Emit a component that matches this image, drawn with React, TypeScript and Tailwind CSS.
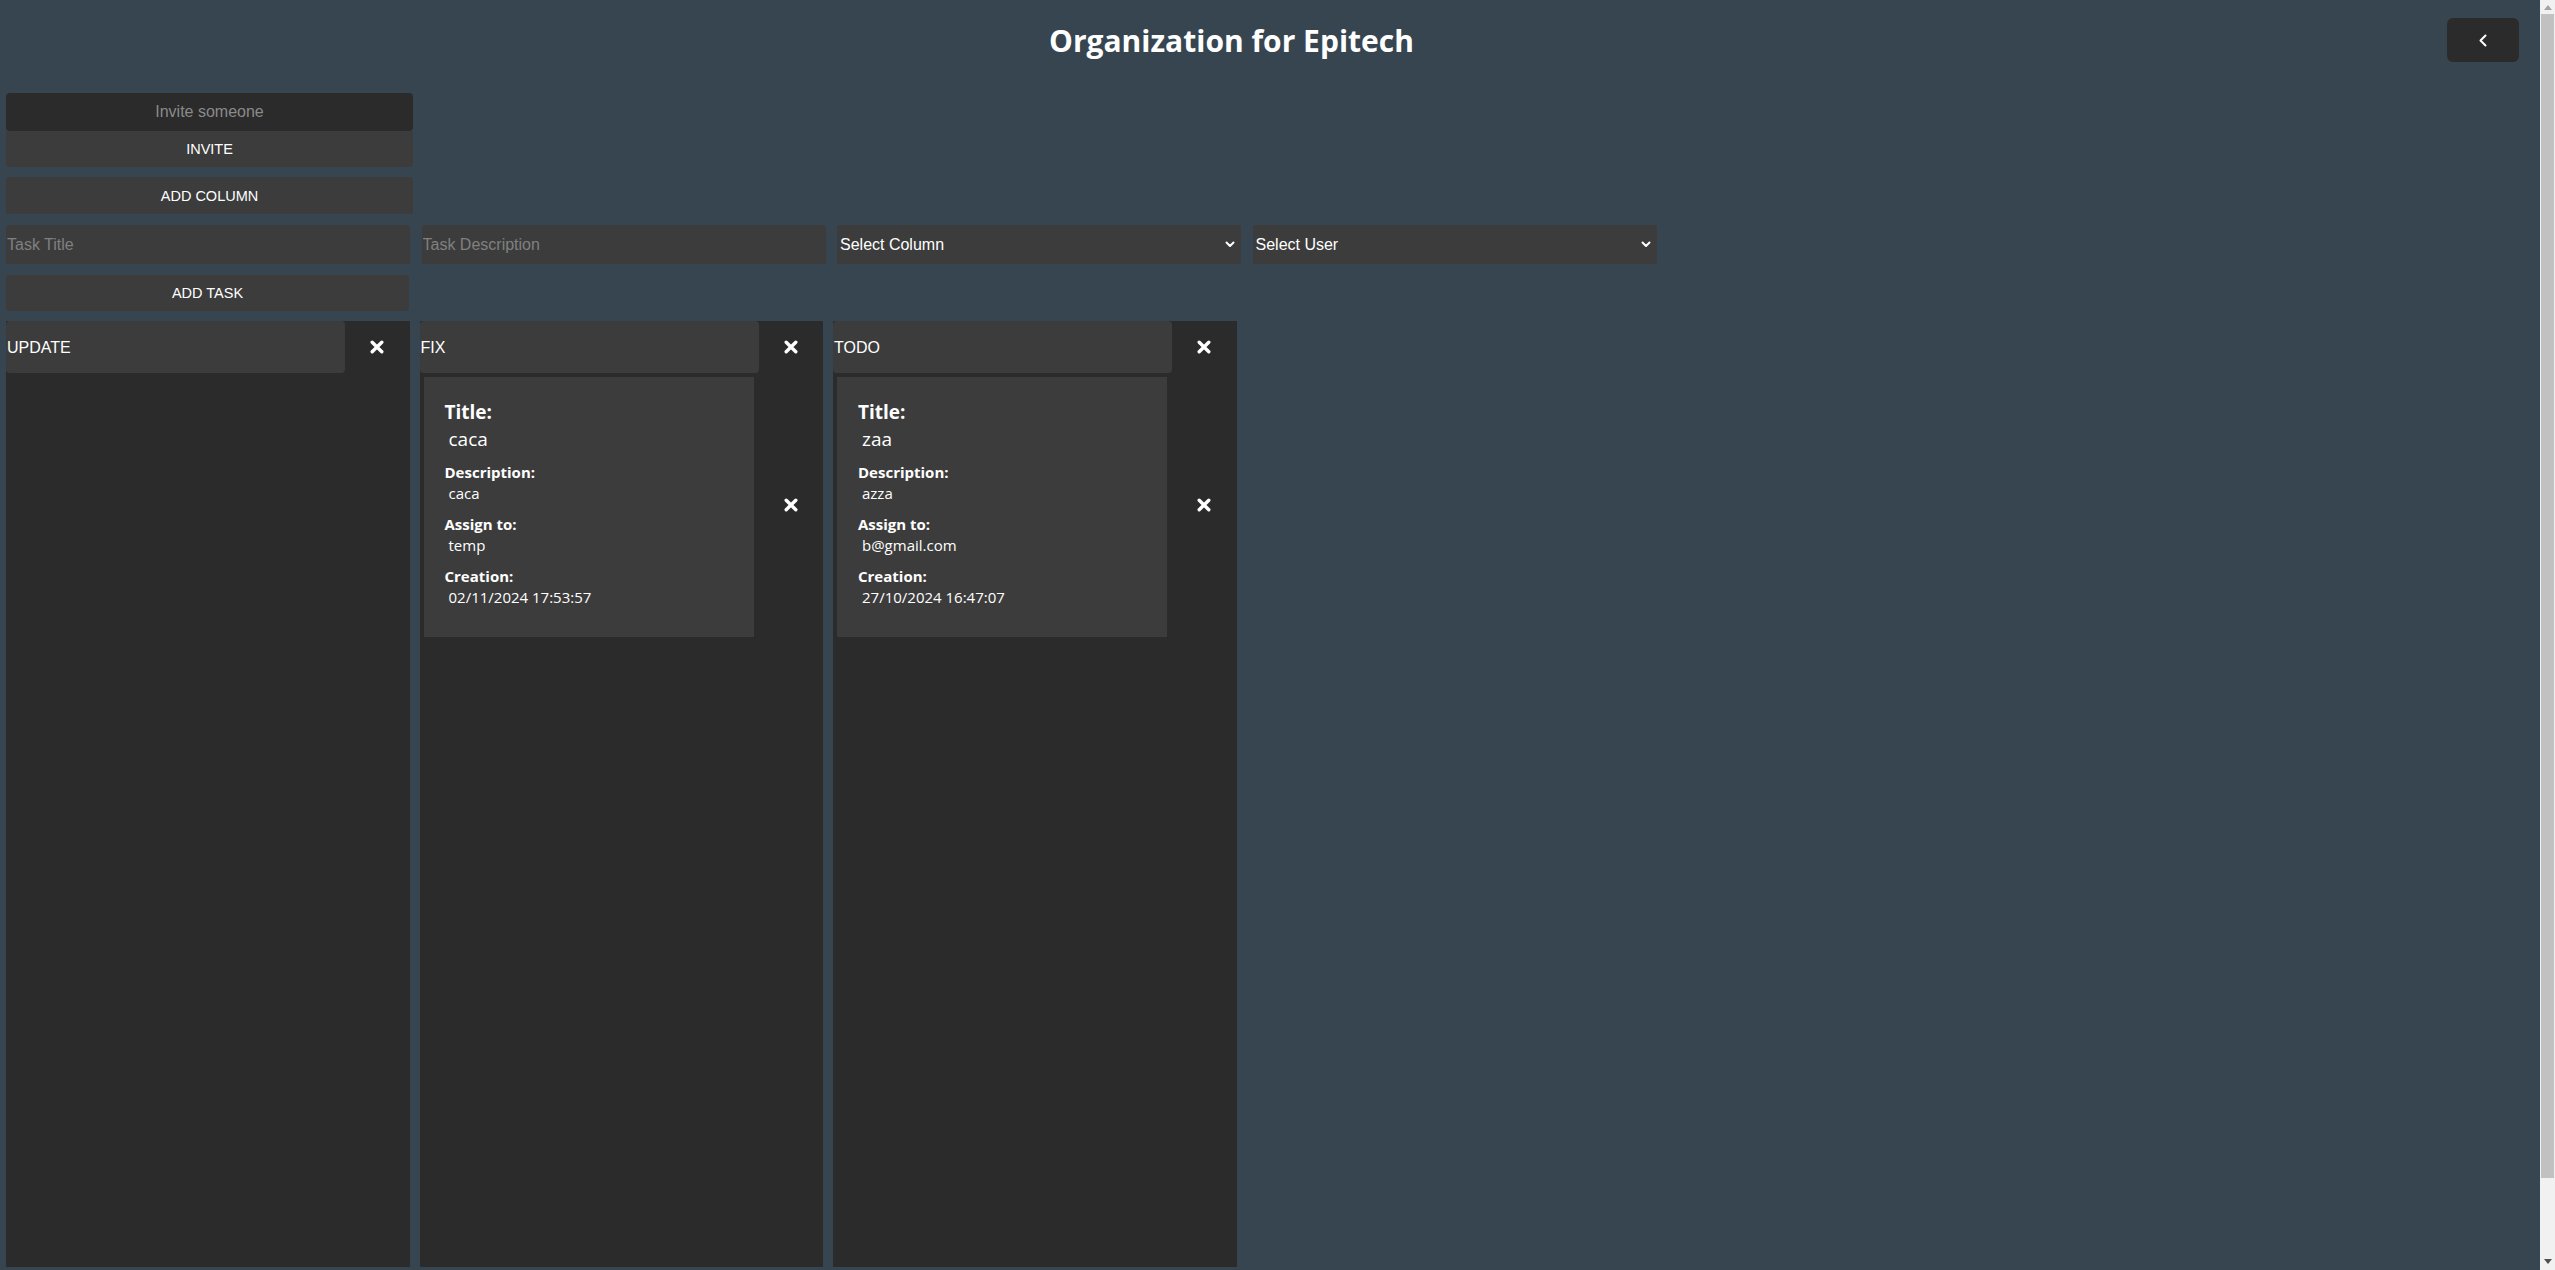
import React from "react";

const XIcon = () => (
  <svg width="14" height="14" viewBox="0 0 14 14" aria-hidden="true">
    <path d="M2.2 2.2 L11.8 11.8 M11.8 2.2 L2.2 11.8" stroke="#ffffff" strokeWidth="3.4" strokeLinecap="round" fill="none" />
  </svg>
);

const Chevron = () => (
  <svg width="10" height="7" viewBox="0 0 10 7" aria-hidden="true">
    <path d="M1.5 1.5 L5 5 L8.5 1.5" stroke="#ffffff" strokeWidth="2" fill="none" strokeLinecap="round" strokeLinejoin="round" />
  </svg>
);

type Task = { title: string; description: string; assign: string; creation: string };
type Column = { name: string; tasks: Task[] };

const columns: Column[] = [
  { name: "UPDATE", tasks: [] },
  {
    name: "FIX",
    tasks: [{ title: "caca", description: "caca", assign: "temp", creation: "02/11/2024 17:53:57" }],
  },
  {
    name: "TODO",
    tasks: [{ title: "zaa", description: "azza", assign: "b@gmail.com", creation: "27/10/2024 16:47:07" }],
  },
];

function TaskCard({ task }: { task: Task }) {
  return (
    <div className="mt-[4px] flex">
      <div className="w-[339px] pl-[4px] pr-[5px]">
        <div className="w-[330px] bg-[#3c3c3c] px-[21px] pb-[30px] pt-[23px] font-['Open_Sans',sans-serif] text-white">
          <div className="text-[19px] font-bold leading-[24px]">Title:</div>
          <div className="mt-[3px] pl-[4px] text-[19px] leading-[24px]">{task.title}</div>
          <div className="mt-[11px] text-[15px] font-bold leading-[20px]">Description:</div>
          <div className="mt-[1px] pl-[4px] text-[15px] leading-[20px]">{task.description}</div>
          <div className="mt-[11px] text-[15px] font-bold leading-[20px]">Assign to:</div>
          <div className="mt-[1px] pl-[4px] text-[15px] leading-[20px]">{task.assign}</div>
          <div className="mt-[11px] text-[15px] font-bold leading-[20px]">Creation:</div>
          <div className="mt-[1px] pl-[4px] text-[15px] leading-[20px]">{task.creation}</div>
        </div>
      </div>
      <div className="flex flex-1 items-center justify-center pb-[4px]">
        <button className="flex items-center justify-center">
          <XIcon />
        </button>
      </div>
    </div>
  );
}

function BoardColumn({ col }: { col: Column }) {
  return (
    <div className="h-full w-[403.5px] shrink-0 bg-[#2b2b2b]">
      <div className="flex">
        <div className="flex h-[52px] w-[339px] items-center rounded-[4px] bg-[#3c3c3c] pl-[1px] pt-[2px] text-[16px] text-white">
          {col.name}
        </div>
        <div className="flex flex-1 items-center justify-center">
          <button className="flex items-center justify-center">
            <XIcon />
          </button>
        </div>
      </div>
      {col.tasks.map((t, i) => (
        <TaskCard key={i} task={t} />
      ))}
    </div>
  );
}

function Scrollbar() {
  return (
    <div className="flex h-full w-[15px] shrink-0 flex-col bg-[#f1f1f1]">
      <div className="flex h-[14px] items-center justify-center">
        <svg width="8" height="5" viewBox="0 0 8 5" aria-hidden="true">
          <path d="M0 5 L4 0 L8 5 Z" fill="#a3a3a3" />
        </svg>
      </div>
      <div className="mx-[1px] h-[1164px] bg-[#c1c1c1]" />
      <div className="flex-1" />
      <div className="flex h-[17px] items-center justify-center">
        <svg width="8" height="5" viewBox="0 0 8 5" aria-hidden="true">
          <path d="M0 0 L8 0 L4 5 Z" fill="#505050" />
        </svg>
      </div>
    </div>
  );
}

export default function App() {
  return (
    <div className="flex h-[1270px] overflow-hidden bg-[#374550] font-['Liberation_Sans',Arial,sans-serif] text-white">
      <div className="flex min-w-0 flex-1 flex-col">
        <header className="flex items-start pt-[18px]">
          <div className="flex-1 pl-[16px] pt-[1px] text-center font-['Open_Sans',sans-serif] text-[30px] font-bold leading-[44px] text-white">
            Organization for Epitech
          </div>
          <button className="mr-[21px] flex h-[44px] w-[72px] items-center justify-center rounded-[6px] bg-[#2b2b2b]">
            <svg width="10" height="13" viewBox="0 0 10 13" aria-hidden="true">
              <path d="M7.5 1.5 L2.5 6.5 L7.5 11.5" stroke="#ffffff" strokeWidth="2" fill="none" strokeLinecap="round" strokeLinejoin="round" />
            </svg>
          </button>
        </header>

        <div className="mt-[30px] flex min-h-0 flex-1 flex-col items-start px-[6px]">
          <input
            placeholder="Invite someone"
            className="h-[38px] w-[407px] shrink-0 rounded-[4px] bg-[#2b2b2b] text-center text-[16px] text-white outline-none placeholder:text-[#8a8a8a]"
          />
          <button className="h-[36px] w-[407px] shrink-0 rounded-b-[3px] bg-[#3c3c3c] pt-[2px] text-[14.5px] text-white">INVITE</button>
          <button className="mt-[10px] h-[37px] w-[407px] shrink-0 rounded-[3px] bg-[#3c3c3c] pt-[2px] text-[14.5px] text-white">
            ADD COLUMN
          </button>

          <div className="mt-[11px] flex shrink-0 gap-[11.5px]">
            <input
              placeholder="Task Title"
              className="h-[39px] w-[404px] rounded-[2px] bg-[#3c3c3c] pl-[1px] text-[16px] text-white outline-none placeholder:text-[#808080]"
            />
            <input
              placeholder="Task Description"
              className="h-[39px] w-[404px] rounded-[2px] bg-[#3c3c3c] pl-[1px] text-[16px] text-white outline-none placeholder:text-[#808080]"
            />
            <div className="relative h-[39px] w-[404px]">
              <select className="h-full w-full appearance-none rounded-[2px] bg-[#3c3c3c] pl-[3px] text-[16px] text-white outline-none">
                <option>Select Column</option>
              </select>
              <span className="pointer-events-none absolute right-[6px] top-[16px]">
                <Chevron />
              </span>
            </div>
            <div className="relative h-[39px] w-[404px]">
              <select className="h-full w-full appearance-none rounded-[2px] bg-[#3c3c3c] pl-[3px] text-[16px] text-white outline-none">
                <option>Select User</option>
              </select>
              <span className="pointer-events-none absolute right-[6px] top-[16px]">
                <Chevron />
              </span>
            </div>
          </div>

          <button className="mt-[11px] h-[36px] w-[403px] shrink-0 rounded-[3px] bg-[#3c3c3c] pt-[2px] text-[14.5px] text-white">ADD TASK</button>

          <div className="mt-[10px] flex min-h-0 flex-1 gap-[10px] pb-[3px]">
            {columns.map((c) => (
              <BoardColumn key={c.name} col={c} />
            ))}
          </div>
        </div>
      </div>
      <Scrollbar />
    </div>
  );
}
